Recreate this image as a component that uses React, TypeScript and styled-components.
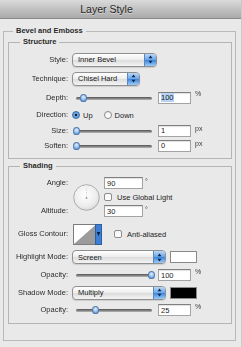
import styled, { createGlobalStyle } from "styled-components";

const GlobalStyle = createGlobalStyle`
  body {
    margin: 0;
    background: #ececec;
    font-family: "Liberation Sans", Arial, sans-serif;
    color: #1e1e1e;
    -webkit-font-smoothing: antialiased;
  }
`;

function Stepper() {
  return (
    <StepperBox>
      <svg width="5" height="9" viewBox="0 0 5 9">
        <path d="M2.5 0.5 L4.5 3.3 L0.5 3.3 Z" fill="#10264a" />
        <path d="M2.5 8.5 L4.5 5.7 L0.5 5.7 Z" fill="#10264a" />
      </svg>
    </StepperBox>
  );
}

function Slider({ value }: { value: number }) {
  return (
    <SliderBox>
      <Track />
      <Thumb style={{ left: `${value * 75}px` }} />
    </SliderBox>
  );
}

function AngleDial() {
  return (
    <svg width="27" height="27" viewBox="0 0 27 27">
      <defs>
        <radialGradient id="dial" cx="45%" cy="40%" r="65%">
          <stop offset="0%" stopColor="#ffffff" />
          <stop offset="70%" stopColor="#ececec" />
          <stop offset="100%" stopColor="#d2d2d2" />
        </radialGradient>
      </defs>
      <circle cx="13.5" cy="13.5" r="12.8" fill="url(#dial)" stroke="#a6a6a6" strokeWidth="0.9" />
      <line x1="13.5" y1="13.5" x2="13.5" y2="4" stroke="#c4c4c4" strokeWidth="0.8" strokeDasharray="1 1.2" />
      <circle cx="13.5" cy="14" r="0.9" fill="#9a9a9a" />
    </svg>
  );
}

function Contour() {
  return (
    <ContourBox>
      <svg width="29" height="21" viewBox="0 0 29 21">
        <rect x="0.5" y="0.5" width="22" height="20" fill="#ffffff" stroke="#7d7d7d" />
        <path d="M1 20 L22.5 1 L22.5 20 Z" fill="#9b9b9b" />
        <rect x="22.5" y="0.5" width="6" height="20" fill="#3d7fd6" stroke="#2d5f9e" />
        <path d="M23.8 8 L27.2 8 L25.5 12 Z" fill="#0c1c36" />
      </svg>
    </ContourBox>
  );
}

export default function App() {
  return (
    <>
      <GlobalStyle />
      <Window>
        <TitleBar>Layer Style</TitleBar>
        <Panel>
          <OuterSet>
            <Legend $ml={5}>Bevel and Emboss</Legend>

            <Group $pb={5}>
              <Legend $ml={11}>Structure</Legend>

              <Row $h={19}>
                <Label>Style:</Label>
                <Select $w={85}>
                  Inner Bevel
                  <Stepper />
                </Select>
              </Row>
              <Row $h={19}>
                <Label>Technique:</Label>
                <Select $w={68}>
                  Chisel Hard
                  <Stepper />
                </Select>
              </Row>
              <Row $h={19}>
                <Label>Depth:</Label>
                <Slider value={0.093} />
                <Field $w={33}>
                  <Selected>100</Selected>
                </Field>
                <Unit>%</Unit>
              </Row>
              <Row $h={16}>
                <Label>Direction:</Label>
                <Radio $on />
                <RadioText>Up</RadioText>
                <Radio $ml={11} />
                <RadioText>Down</RadioText>
              </Row>
              <Row $h={15}>
                <Label>Size:</Label>
                <Slider value={0} />
                <Field $w={33}>1</Field>
                <Unit>px</Unit>
              </Row>
              <Row $h={15}>
                <Label>Soften:</Label>
                <Slider value={0} />
                <Field $w={33}>0</Field>
                <Unit>px</Unit>
              </Row>
            </Group>

            <Group $pb={4} $mt={2}>
              <Legend $ml={11}>Shading</Legend>

              <AngleBlock>
                <LabelColumn>
                  <Label>Angle:</Label>
                  <Label>Altitude:</Label>
                </LabelColumn>
                <DialWrap>
                  <AngleDial />
                </DialWrap>
                <RightColumn>
                  <SubRow>
                    <Field $w={39} $ml={0}>90</Field>
                    <Unit $ml={2}>°</Unit>
                  </SubRow>
                  <SubRow>
                    <Check $ml={0} />
                    <CheckText>Use Global Light</CheckText>
                  </SubRow>
                  <SubRow>
                    <Field $w={39} $ml={0}>30</Field>
                    <Unit $ml={2}>°</Unit>
                  </SubRow>
                </RightColumn>
              </AngleBlock>

              <Row $h={22} $mt={5}>
                <Label>Gloss Contour:</Label>
                <Contour />
                <Check $ml={12} />
                <CheckText>Anti-aliased</CheckText>
              </Row>

              <Row $h={18} $mt={3}>
                <Label>Highlight Mode:</Label>
                <Select $w={94}>
                  Screen
                  <Stepper />
                </Select>
                <Swatch $color="#ffffff" />
              </Row>
              <Row $h={18}>
                <Label>Opacity:</Label>
                <Slider value={1} />
                <Field $w={33}>100</Field>
                <Unit>%</Unit>
              </Row>
              <Row $h={17}>
                <Label>Shadow Mode:</Label>
                <Select $w={94}>
                  Multiply
                  <Stepper />
                </Select>
                <Swatch $color="#000000" />
              </Row>
              <Row $h={18}>
                <Label>Opacity:</Label>
                <Slider value={0.25} />
                <Field $w={33}>25</Field>
                <Unit>%</Unit>
              </Row>
            </Group>
          </OuterSet>
        </Panel>
      </Window>
    </>
  );
}

const Window = styled.div`
  width: 241px;
  height: 347px;
  border-right: 1px solid #c9c9c9;
  background: #e9e9e9;
  overflow: hidden;
`;

const TitleBar = styled.div`
  height: 19px;
  box-sizing: border-box;
  padding-right: 28px;
  display: flex;
  align-items: center;
  justify-content: center;
  font-size: 10.5px;
  color: #262626;
  background: linear-gradient(#dadada, #c4c4c4 45%, #aaaaaa);
  border-bottom: 1px solid #8c8c8c;
  text-shadow: 0 1px 0 rgba(255, 255, 255, 0.45);
`;

const Panel = styled.div`
  padding-top: 7px;
`;

const OuterSet = styled.fieldset`
  margin: 0 5px 0 3px;
  padding: 1px 3px 16px 4px;
  border: 1px solid #b9b9b9;
  min-inline-size: 0;
`;

const Group = styled.fieldset<{ $pb: number; $mt?: number }>`
  margin: ${(p) => p.$mt || 0}px 0 0 0;
  padding: 3px 0 ${(p) => p.$pb}px 0;
  border: 1px solid #b4b4b4;
  min-inline-size: 0;
`;

const Legend = styled.legend<{ $ml: number }>`
  margin-left: ${(p) => p.$ml}px;
  padding: 0 3px;
  font-size: 7.5px;
  font-weight: bold;
  line-height: 10px;
  color: #2a2a2a;
`;

const Row = styled.div<{ $h: number; $mt?: number }>`
  display: flex;
  align-items: center;
  height: ${(p) => p.$h}px;
  margin-top: ${(p) => p.$mt || 0}px;
`;

const Label = styled.div`
  width: 59px;
  margin-right: 4px;
  flex-shrink: 0;
  text-align: right;
  font-size: 7.5px;
  line-height: 14px;
  color: #2b2b2b;
  white-space: nowrap;
  filter: grayscale(1);
`;

const Select = styled.div<{ $w: number }>`
  width: ${(p) => p.$w}px;
  height: 14px;
  box-sizing: border-box;
  padding-left: 5px;
  display: flex;
  align-items: center;
  font-size: 7.5px;
  color: #1a1a1a;
  border: 1px solid #8f8f8f;
  border-radius: 4px;
  overflow: hidden;
  background: linear-gradient(#ffffff, #ececec 50%, #dcdcdc 52%, #f4f4f4);
  box-shadow: 0 1px 1px rgba(0, 0, 0, 0.12);
`;

const StepperBox = styled.div`
  margin-left: auto;
  width: 11px;
  height: 100%;
  display: flex;
  align-items: center;
  justify-content: center;
  border-left: 1px solid #5d86bb;
  background: linear-gradient(#b9d8f8, #6aa6ea 48%, #3c86dd 52%, #9ccbf6);
`;

const SliderBox = styled.div`
  position: relative;
  width: 82px;
  height: 10px;
  margin-left: 1px;
  flex-shrink: 0;
`;

const Track = styled.div`
  position: absolute;
  left: 3px;
  right: 3px;
  top: 4px;
  height: 3px;
  border-radius: 2px;
  background: linear-gradient(#4f4f4f, #8d8d8d 60%, #b5b5b5);
`;

const Thumb = styled.div`
  position: absolute;
  top: 1px;
  width: 7px;
  height: 8px;
  box-sizing: border-box;
  border-radius: 50% 50% 45% 45%;
  border: 1px solid #5a7eab;
  background: radial-gradient(circle at 50% 35%, #e4f1ff, #8fbcef 55%, #4b8bd8);
`;

const Field = styled.div<{ $w: number; $ml?: number }>`
  width: ${(p) => p.$w}px;
  height: 12px;
  box-sizing: border-box;
  margin-left: ${(p) => (p.$ml === undefined ? 3 : p.$ml)}px;
  padding-left: 2px;
  display: flex;
  align-items: center;
  font-size: 7.5px;
  color: #1a1a1a;
  background: #ffffff;
  border: 1px solid #a3a3a3;
  border-top-color: #7f7f7f;
  box-shadow: inset 0 1px 1px rgba(0, 0, 0, 0.12);
`;

const Selected = styled.span`
  background: #b6d3f7;
  line-height: 9px;
`;

const Unit = styled.span<{ $ml?: number }>`
  margin-left: ${(p) => (p.$ml === undefined ? 4 : p.$ml)}px;
  align-self: flex-start;
  margin-top: 2px;
  font-size: 7px;
  color: #3a3a3a;
  filter: grayscale(1);
`;

const Radio = styled.div<{ $on?: boolean; $ml?: number }>`
  width: 8px;
  height: 8px;
  box-sizing: border-box;
  margin-left: ${(p) => p.$ml || 0}px;
  border-radius: 50%;
  border: 1px solid ${(p) => (p.$on ? "#3d6aa3" : "#8a8a8a")};
  background: ${(p) =>
    p.$on
      ? "radial-gradient(circle, #0e1a2c 0 1.3px, #74aee9 1.6px, #3e82d6)"
      : "linear-gradient(#f2f2f2, #ffffff)"};
  flex-shrink: 0;
`;

const RadioText = styled.span`
  margin-left: 3px;
  font-size: 7.5px;
  color: #222;
`;

const AngleBlock = styled.div`
  display: flex;
  height: 42px;
  margin-top: 2px;
`;

const LabelColumn = styled.div`
  display: flex;
  flex-direction: column;
  justify-content: space-between;
`;

const DialWrap = styled.div`
  display: flex;
  align-items: center;
  margin-left: 1px;
  margin-top: 1px;
`;

const RightColumn = styled.div`
  display: flex;
  flex-direction: column;
  margin-left: 4px;
`;

const SubRow = styled.div`
  display: flex;
  align-items: center;
  height: 14px;
`;

const Check = styled.div<{ $ml: number }>`
  width: 8px;
  height: 8px;
  box-sizing: border-box;
  margin-left: ${(p) => p.$ml}px;
  border: 1px solid #8d8d8d;
  border-radius: 2px;
  background: linear-gradient(#f4f4f4, #ffffff);
  flex-shrink: 0;
`;

const CheckText = styled.span`
  margin-left: 5px;
  font-size: 7.5px;
  color: #222;
`;

const ContourBox = styled.div`
  display: flex;
  margin-left: 1px;
`;

const Swatch = styled.div<{ $color: string }>`
  width: 27px;
  height: 12px;
  margin-left: 4px;
  box-sizing: border-box;
  border: 1px solid #8a8a8a;
  background: ${(p) => p.$color};
`;
